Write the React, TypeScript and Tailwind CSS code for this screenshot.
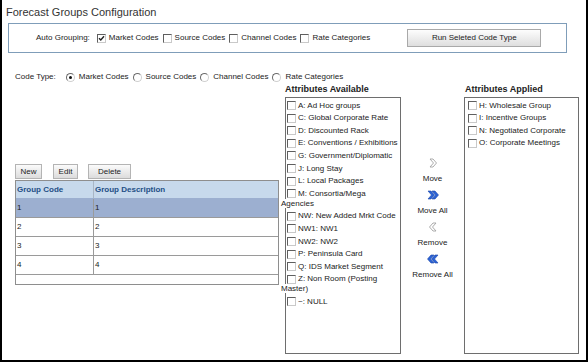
const available = [
  "A: Ad Hoc groups",
  "C: Global Corporate Rate",
  "D: Discounted Rack",
  "E: Conventions / Exhibitions",
  "G: Government/Diplomatic",
  "J: Long Stay",
  "L: Local Packages",
  ["M: Consortia/Mega", "Agencies"],
  "NW: New Added Mrkt Code",
  "NW1: NW1",
  "NW2: NW2",
  "P: Peninsula Card",
  "Q: IDS Market Segment",
  ["Z: Non Room (Posting", "Master)"],
  "~: NULL",
];

const applied = [
  "H: Wholesale Group",
  "I: Incentive Groups",
  "N: Negotiated Corporate",
  "O: Corporate Meetings",
];

const groups = ["1", "2", "3", "4"];

function Check({ checked = false, className = "" }: { checked?: boolean; className?: string }) {
  return (
    <span
      className={`inline-flex w-[9px] h-[9px] bg-white border border-t-[#5f5f5f] border-l-[#5f5f5f] border-r-[#c9c9c9] border-b-[#c9c9c9] items-center justify-center ${className}`}
    >
      {checked && (
        <svg width="7" height="7" viewBox="0 0 7 7">
          <path d="M1 3.2 L2.8 5 L6 1.3" fill="none" stroke="#222" strokeWidth={1.4} />
        </svg>
      )}
    </span>
  );
}

function Radio({ checked = false }: { checked?: boolean }) {
  return (
    <span className="inline-flex w-[9px] h-[9px] rounded-full bg-white border border-t-[#6a6a6a] border-l-[#6a6a6a] border-r-[#d0d0d0] border-b-[#d0d0d0] items-center justify-center">
      {checked && <span className="w-[3px] h-[3px] rounded-full bg-[#111]" />}
    </span>
  );
}

function Chevron({ dir, double }: { dir: "right" | "left"; double?: boolean }) {
  const flip = dir === "left" ? "scale(-1,1) translate(-12,0)" : undefined;
  if (double) {
    return (
      <svg width="12" height="10" viewBox="0 0 12 10">
        <g transform={flip}>
          <polygon points="1,1 4,1 7.5,5 4,9 1,9 4.5,5" fill="#2a62d6" stroke="#1b47a8" strokeWidth={0.6} />
          <polygon points="5,1 8,1 11.5,5 8,9 5,9 8.5,5" fill="#2a62d6" stroke="#1b47a8" strokeWidth={0.6} />
        </g>
      </svg>
    );
  }
  return (
    <svg width="12" height="10" viewBox="0 0 12 10">
      <g transform={flip}>
        <polygon points="3,1 6,1 9.5,5 6,9 3,9 6.5,5" fill="#fff" stroke="#a3a3a3" strokeWidth={0.9} />
      </g>
    </svg>
  );
}

function ListItem({ label }: { label: string | string[] }) {
  return (
    <div className="pt-[2.6px] leading-[10px] whitespace-nowrap">
      <Check className="float-left ml-[6px] mr-[2px] mt-[0.5px]" />
      {Array.isArray(label) ? (
        <span className="bg-white">
          {label[0]}
          <br />
          {label[1]}
        </span>
      ) : (
        <span>{label}</span>
      )}
    </div>
  );
}

function SmallButton({ children, w }: { children: string; w: string }) {
  return (
    <button
      className={`${w} h-[15px] text-[8px] leading-[13px] text-[#222] border border-[#b4b4b4] bg-gradient-to-b from-[#fbfbfb] to-[#dcdcdc]`}
    >
      {children}
    </button>
  );
}

export default function App() {
  return (
    <div className="w-[588px] h-[362px] bg-white border-x-2 border-b-2 border-black font-['Liberation_Sans',Arial,sans-serif] text-[8px] text-[#222] overflow-hidden">
      {/* Title */}
      <div className="pl-[4px] pt-[5px] text-[11px] leading-[14px] text-[#333]">
        Forecast Groups Configuration
      </div>

      {/* Auto grouping box */}
      <div className="mt-[4px] ml-[6px] w-[559px] h-[30px] border border-[#7f9db9] flex items-center pl-[27px]">
        <span>Auto Grouping:</span>
        <Check checked className="ml-[7px] mr-[3px]" />
        <span>Market Codes</span>
        <Check className="ml-[4px] mr-[3px]" />
        <span>Source Codes</span>
        <Check className="ml-[4px] mr-[3px]" />
        <span>Channel Codes</span>
        <Check className="ml-[4px] mr-[3px]" />
        <span>Rate Categories</span>
        <button className="ml-[37px] w-[134px] h-[18px] text-[8px] text-[#222] border border-[#a9a9a9] bg-gradient-to-b from-[#fdfdfd] to-[#dedede]">
          Run Seleted Code Type
        </button>
      </div>

      {/* Code type */}
      <div className="mt-[18px] pl-[13px] h-[12px] leading-[12px] flex items-center">
        <span>Code Type:</span>
        <span className="ml-[10px] mr-[4px] flex">
          <Radio checked />
        </span>
        <span>Market Codes</span>
        <span className="ml-[4px] mr-[4px] flex">
          <Radio />
        </span>
        <span>Source Codes</span>
        <span className="ml-[4px] mr-[4px] flex">
          <Radio />
        </span>
        <span>Channel Codes</span>
        <span className="ml-[4px] mr-[4px] flex">
          <Radio />
        </span>
        <span>Rate Categories</span>
      </div>

      {/* Main area */}
      <div className="mt-[1px] flex items-start">
        {/* Groups table */}
        <div className="ml-[13px] w-[264px] mr-[6px] pt-[80px]">
          <div className="flex h-[15px] mb-[1px]">
            <SmallButton w="w-[27px]">New</SmallButton>
            <span className="ml-[11px]">
              <SmallButton w="w-[25px]">Edit</SmallButton>
            </span>
            <span className="ml-[10px]">
              <SmallButton w="w-[43px]">Delete</SmallButton>
            </span>
          </div>
          <div className="border border-[#8e8e8e]">
            <div className="flex h-[17px] bg-[#c7d9ec] font-bold text-[#234f86] leading-[17px]">
              <div className="w-[78px] border-r border-[#a9b6c6] pl-[1px]">Group Code</div>
              <div className="pl-[1px]">Group Description</div>
            </div>
            {groups.map((g, i) => (
              <div
                key={g}
                className={`flex h-[19px] leading-[18px] border-t border-[#9a9a9a] ${i === 0 ? "bg-[#9cafd0] border-t-[#9cafd0]" : ""}`}
              >
                <div className="w-[78px] border-r border-[#9a9a9a] pl-[1px]">{g}</div>
                <div className="pl-[1px]">{g}</div>
              </div>
            ))}
            <div className="h-[10px] border-t border-[#9a9a9a]" />
          </div>
        </div>

        {/* Attributes available */}
        <div className="w-[116px]">
          <div className="h-[13px] text-[9px] leading-[11px] font-bold text-[#222]">Attributes Available</div>
          <div className="h-[257px] border border-[#6e6e6e]">
            <div className="-ml-[5px]">
              {available.map((a, i) => (
                <ListItem key={i} label={a} />
              ))}
            </div>
          </div>
        </div>

        {/* Move controls */}
        <div className="w-[63px] pt-[71px] flex flex-col items-center text-[#222]">
          <div className="h-[16px] flex items-center">
            <Chevron dir="right" />
          </div>
          <div className="h-[16px] leading-[16px]">Move</div>
          <div className="h-[16px] flex items-center">
            <Chevron dir="right" double />
          </div>
          <div className="h-[16px] leading-[16px]">Move All</div>
          <div className="h-[16px] flex items-center">
            <Chevron dir="left" />
          </div>
          <div className="h-[16px] leading-[16px]">Remove</div>
          <div className="h-[16px] flex items-center">
            <Chevron dir="left" double />
          </div>
          <div className="h-[16px] leading-[16px]">Remove All</div>
        </div>

        {/* Attributes applied */}
        <div className="w-[115px]">
          <div className="h-[13px] pl-[1px] text-[9px] leading-[11px] font-bold text-[#222]">Attributes Applied</div>
          <div className="h-[257px] border border-[#6e6e6e]">
            <div className="pl-[-2px]">
              {applied.map((a) => (
                <div key={a} className="pt-[2.6px] leading-[10px] whitespace-nowrap">
                  <Check className="float-left ml-[3px] mr-[2px] mt-[0.5px]" />
                  <span>{a}</span>
                </div>
              ))}
            </div>
          </div>
        </div>
      </div>
    </div>
  );
}
